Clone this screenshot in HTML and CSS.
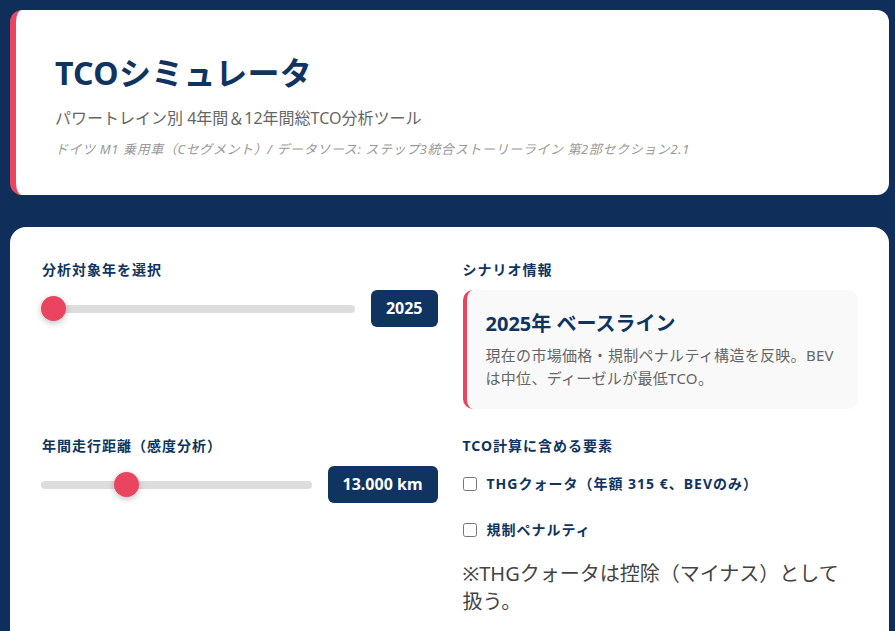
FILE: index.html
```html
<!DOCTYPE html>
<html lang="ja">
<head>
<meta charset="utf-8">
<title>TCOシミュレータ</title>
<link rel="stylesheet" href="styles.css">
</head>
<body>
<div class="page">
  <header class="hero">
    <h1 class="hero-title">TCOシミュレータ</h1>
    <p class="hero-sub">パワートレイン別 4年間＆12年間総TCO分析ツール</p>
    <p class="hero-meta">ドイツ M1 乗用車（Cセグメント）/ データソース: ステップ3統合ストーリーライン 第2部セクション2.1</p>
  </header>

  <section class="panel">
    <div class="grid">
      <div class="cell">
        <div class="label">分析対象年を選択</div>
        <div class="slider-row">
          <input class="range" type="range" min="2025" max="2040" value="2025">
          <div class="badge">2025</div>
        </div>
      </div>
      <div class="cell">
        <div class="label">シナリオ情報</div>
        <div class="scenario">
          <div class="scenario-title">2025年 ベースライン</div>
          <div class="scenario-desc">現在の市場価格・規制ペナルティ構造を反映。BEVは中位、ディーゼルが最低TCO。</div>
        </div>
      </div>
      <div class="cell">
        <div class="label">年間走行距離（感度分析）</div>
        <div class="slider-row">
          <input class="range" type="range" min="0" max="44000" step="1000" value="13000">
          <div class="badge">13.000 km</div>
        </div>
      </div>
      <div class="cell">
        <div class="label">TCO計算に含める要素</div>
        <label class="check check-first"><input type="checkbox"><span>THGクォータ（年額 315 €、BEVのみ）</span></label>
        <label class="check check-next"><input type="checkbox"><span>規制ペナルティ</span></label>
        <p class="note">※THGクォータは控除（マイナス）として扱う。</p>
      </div>
    </div>
  </section>
</div>
</body>
</html>
```

FILE: styles.css
```css
* { box-sizing: border-box; }
html, body { margin: 0; padding: 0; }
body {
  background: #0f2f5a;
  font-family: "Noto Sans", "Noto Sans CJK JP", sans-serif;
  height: 631px;
  overflow: hidden;
}
.page {
  padding: 10px 6px 0 10px;
  display: flex;
  flex-direction: column;
  gap: 32px;
}
.hero {
  background: #fff;
  border-left: 6px solid #e94560;
  border-radius: 12px;
  padding: 40px 39px 36px;
}
.hero-title {
  margin: 0 0 11px;
  font-size: 32px;
  line-height: 45px;
  font-weight: 700;
  color: #0f3460;
  letter-spacing: 0.3px;
}
.hero-sub {
  margin: 0 0 10px;
  font-size: 16px;
  line-height: 24px;
  color: #666;
}
.hero-meta {
  margin: 0;
  font-size: 13px;
  line-height: 19px;
  font-style: italic;
  color: #999;
  letter-spacing: 0.6px;
}
.panel {
  background: #fff;
  border-radius: 16px;
  padding: 32px 31px 40px 32px;
  min-height: 500px;
}
.grid {
  display: grid;
  grid-template-columns: 1fr 1fr;
  column-gap: 25px;
  row-gap: 26px;
}
.label {
  font-size: 14px;
  line-height: 21px;
  font-weight: 700;
  color: #0f3460;
  margin-bottom: 10px;
  letter-spacing: 1px;
}
.slider-row {
  display: flex;
  align-items: center;
  gap: 16px;
}
.range {
  -webkit-appearance: none;
  appearance: none;
  flex: 1;
  margin: 0 0 0 -1px;
  height: 8px;
  background: #ddd;
  border-radius: 4px;
  outline: none;
}
.range::-webkit-slider-thumb {
  -webkit-appearance: none;
  appearance: none;
  width: 25px;
  height: 25px;
  border-radius: 50%;
  background: #e94560;
  box-shadow: 0 2px 6px rgba(0, 0, 0, 0.25);
  cursor: pointer;
}
.badge {
  background: #0f3460;
  color: #fff;
  font-weight: 700;
  font-size: 16px;
  line-height: 24px;
  padding: 6px 15px 7px;
  border-radius: 6px;
  white-space: nowrap;
}
.scenario {
  background: #f9f9f9;
  border-left: 4px solid #e94560;
  border-radius: 10px;
  padding: 20px 20px 20px 19px;
}
.scenario-title {
  font-size: 20px;
  line-height: 28px;
  font-weight: 700;
  color: #0f3460;
  margin-bottom: 6px;
}
.scenario-desc {
  font-size: 15px;
  line-height: 22.5px;
  color: #666;
  letter-spacing: 0.3px;
}
.check {
  display: flex;
  align-items: center;
  gap: 10px;
  font-size: 14px;
  line-height: 21px;
  font-weight: 700;
  color: #0f3460;
  margin: 0;
  letter-spacing: 1px;
}
.check-first { margin-top: 17px; }
.check-next { margin-top: 25px; }
.check input {
  margin: 0;
  width: 14px;
  height: 14px;
}
.note {
  margin: 20px 0 0;
  font-size: 20px;
  line-height: 28px;
  color: #444;
}
```
